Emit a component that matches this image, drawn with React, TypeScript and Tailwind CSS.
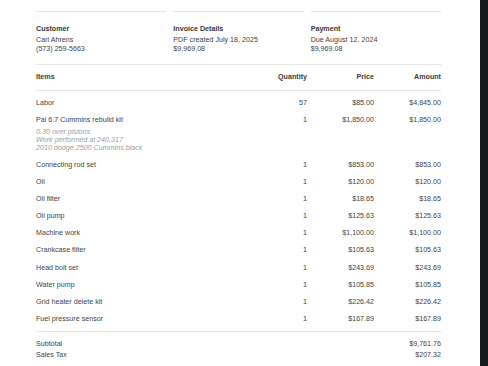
import React from 'react';

type Item = { name: string; qty: string; price: string; amount: string; notes?: string[] };

const items: Item[] = [
  { name: 'Labor', qty: '57', price: '$85.00', amount: '$4,845.00' },
  {
    name: 'Pai 6.7 Cummins rebuild kit',
    qty: '1',
    price: '$1,850.00',
    amount: '$1,850.00',
    notes: ['0.30 over pistons', 'Work performed at 240,317', '2010 dodge 2500 Cummins black'],
  },
  { name: 'Connecting rod set', qty: '1', price: '$853.00', amount: '$853.00' },
  { name: 'Oil', qty: '1', price: '$120.00', amount: '$120.00' },
  { name: 'Oil filter', qty: '1', price: '$18.65', amount: '$18.65' },
  { name: 'Oil pump', qty: '1', price: '$125.63', amount: '$125.63' },
  { name: 'Machine work', qty: '1', price: '$1,100.00', amount: '$1,100.00' },
  { name: 'Crankcase filter', qty: '1', price: '$105.63', amount: '$105.63' },
  { name: 'Head bolt set', qty: '1', price: '$243.69', amount: '$243.69' },
  { name: 'Water pump', qty: '1', price: '$105.85', amount: '$105.85' },
  { name: 'Grid heater delete kit', qty: '1', price: '$226.42', amount: '$226.42' },
  { name: 'Fuel pressure sensor', qty: '1', price: '$167.89', amount: '$167.89' },
];

const details = [
  { label: 'Customer', lines: ['Cari Ahrens', '(573) 259-5663'] },
  { label: 'Invoice Details', lines: ['PDF created July 18, 2025', '$9,969.08'] },
  { label: 'Payment', lines: ['Due August 12, 2024', '$9,969.08'] },
];

export default function App() {
  return (
    <div className="flex w-[488px] h-[366px] overflow-hidden bg-white text-[7.15px] text-[#444] font-['Liberation_Sans',Arial,sans-serif]">
      <div className="flex-1 pl-[36px] pr-[39px] pt-[11px]">
        {/* summary blocks */}
        <div className="grid grid-cols-3 gap-x-[7px]">
          {details.map((d) => (
            <div key={d.label} className="border-t border-[#e6e6e6] pt-[12.5px] pb-[10px] leading-[9px]">
              <div className="font-bold text-[#383838] mb-[2px]">{d.label}</div>
              {d.lines.map((l) => (
                <div key={l}>{l}</div>
              ))}
            </div>
          ))}
        </div>

        {/* table header */}
        <div className="grid grid-cols-[1fr_67px_67px_67px] h-[27px] items-center border-y border-[#e6e6e6] font-bold text-[#3c3c3c] leading-[9px]">
          <div>Items</div>
          <div className="text-right">Quantity</div>
          <div className="text-right">Price</div>
          <div className="text-right">Amount</div>
        </div>

        {/* rows */}
        <div className="pt-[4px] pb-[3px] border-b border-[#e6e6e6]">
          {items.map((it) => (
            <div key={it.name} className="grid grid-cols-[1fr_67px_67px_67px] py-[4px] leading-[9.14px]">
              <div>
                <div>{it.name}</div>
                {it.notes && (
                  <div className="mt-[3px] italic text-[#a0a0a0] leading-[8.33px]">
                    {it.notes.map((n) => (
                      <div key={n}>{n}</div>
                    ))}
                  </div>
                )}
              </div>
              <div className="text-right">{it.qty}</div>
              <div className="text-right">{it.price}</div>
              <div className="text-right">{it.amount}</div>
            </div>
          ))}
        </div>

        {/* totals */}
        <div className="pt-[7px] pb-[7px] border-b border-[#e6e6e6] leading-[10.7px]">
          <div className="flex justify-between">
            <span>Subtotal</span>
            <span>$9,761.76</span>
          </div>
          <div className="flex justify-between">
            <span>Sales Tax</span>
            <span>$207.32</span>
          </div>
        </div>
      </div>
      <div className="w-[8px] shrink-0 bg-[#17181c]" />
    </div>
  );
}
